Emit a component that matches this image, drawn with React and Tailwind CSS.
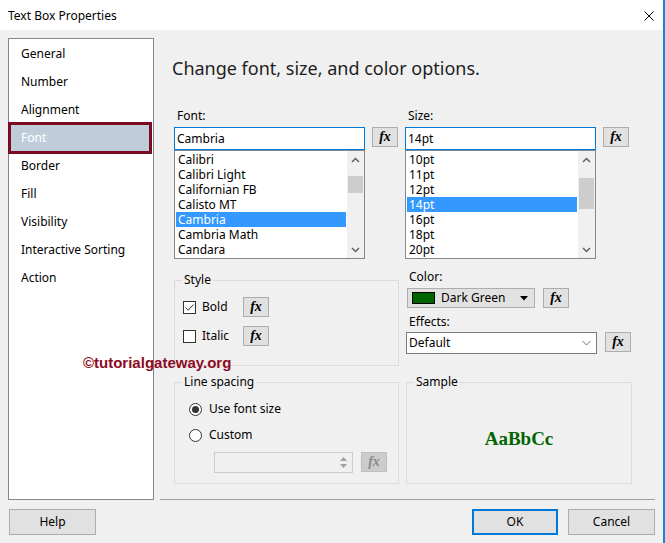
import React from 'react'

const navItems = ['General', 'Number', 'Alignment', 'Font', 'Border', 'Fill', 'Visibility', 'Interactive Sorting', 'Action']
const fontItems = ['Calibri', 'Calibri Light', 'Californian FB', 'Calisto MT', 'Cambria', 'Cambria Math', 'Candara']
const sizeItems = ['10pt', '11pt', '12pt', '14pt', '16pt', '18pt', '20pt']

function FxButton({ disabled }) {
  return (
    <button
      className={
        disabled
          ? 'w-[26px] h-[20px] shrink-0 flex items-center justify-center bg-[#cccccc] border border-[#bfbfbf] text-[#8a8a8a]'
          : 'w-[26px] h-[20px] shrink-0 flex items-center justify-center bg-[#e1e1e1] border border-[#adadad] text-black'
      }
    >
      <span className="font-['Liberation_Serif',serif] font-bold italic text-[14px] leading-none">fx</span>
    </button>
  )
}

function Scrollbar({ thumb }) {
  return (
    <div className="w-[17px] bg-[#f0f0f0] flex flex-col">
      <div className="h-[17px] flex items-center justify-center">
        <svg width="9" height="6" viewBox="0 0 9 6">
          <path d="M1 5 L4.5 1.5 L8 5" fill="none" stroke="#606060" strokeWidth="1.5" />
        </svg>
      </div>
      <div className="flex-1">
        <div className={thumb} />
      </div>
      <div className="h-[17px] flex items-center justify-center">
        <svg width="9" height="6" viewBox="0 0 9 6">
          <path d="M1 1 L4.5 4.5 L8 1" fill="none" stroke="#606060" strokeWidth="1.5" />
        </svg>
      </div>
    </div>
  )
}

function PickList({ label, value, items, selected, thumb }) {
  return (
    <div className="w-[224px] flex flex-col">
      <div className="h-[16px] leading-[16px] pl-[3px]">{label}</div>
      <div className="mt-[3px] flex items-start gap-[7px]">
        <div className="w-[191px]">
          <div className="h-[23px] border border-[#0078d7] bg-white pl-[2px] flex items-center">{value}</div>
          <div className="h-[109px] border border-[#828790] bg-white flex">
            <div className="flex-1 p-[1px]">
              {items.map(it => (
                <div
                  key={it}
                  className={
                    it === selected
                      ? 'h-[15px] leading-[15px] pl-[2px] bg-[#3399ff] text-white'
                      : 'h-[15px] leading-[15px] pl-[2px]'
                  }
                >
                  {it}
                </div>
              ))}
            </div>
            <Scrollbar thumb={thumb} />
          </div>
        </div>
        <FxButton />
      </div>
    </div>
  )
}

function GroupBox({ title, className, children }) {
  return (
    <div className={className}>
      <div className="-mt-[9px] ml-[7px] px-[2px] w-fit h-[16px] leading-[16px] bg-[#f0f0f0]">{title}</div>
      {children}
    </div>
  )
}

function Radio({ checked, label }) {
  return (
    <div className="h-[16px] flex items-center">
      <div className="w-[13px] h-[13px] rounded-full border border-[#333333] bg-white flex items-center justify-center">
        {checked && <div className="w-[7px] h-[7px] rounded-full bg-[#333333]" />}
      </div>
      <span className="ml-[7px] leading-[16px]">{label}</span>
    </div>
  )
}

function Check({ checked, label }) {
  return (
    <div className="w-[60px] h-[20px] flex items-center">
      <div className="w-[13px] h-[13px] border border-[#333333] bg-white flex items-center justify-center">
        {checked && (
          <svg width="11" height="11" viewBox="0 0 11 11">
            <path d="M1.5 5.5 L4.2 8.2 L9.5 2.5" fill="none" stroke="#333333" strokeWidth="1" />
          </svg>
        )}
      </div>
      <span className="ml-[6px] leading-[16px]">{label}</span>
    </div>
  )
}

export default function App() {
  return (
    <div className="w-[665px] h-[543px] bg-[#f0f0f0] border-r-2 border-[#1883d7] font-['Noto_Sans',sans-serif] text-[12px] text-black relative overflow-hidden">
      {/* Title bar */}
      <div className="h-[30px] bg-white flex items-center justify-between pl-[8px] pr-[9px] pt-[1px]">
        <span className="leading-[16px]">Text Box Properties</span>
        <svg width="10" height="10" viewBox="0 0 10 10">
          <path d="M0.5 0.5 L9.5 9.5 M9.5 0.5 L0.5 9.5" stroke="#000" strokeWidth="1" />
        </svg>
      </div>

      <div className="flex pl-[8px] pt-[8px]">
        {/* Left nav */}
        <div className="w-[146px] h-[462px] bg-white border border-[#828790] pt-[1px]">
          {navItems.map(n =>
            n === 'Font' ? (
              <div
                key={n}
                className="-ml-[1px] w-[144px] h-[32px] -my-[2px] border-[3px] border-[#7b0b20] bg-[#bfcddb] text-white flex items-center pl-[10px] relative"
              >
                {n}
              </div>
            ) : (
              <div key={n} className="h-[28px] flex items-center pl-[12px]">
                {n}
              </div>
            )
          )}
        </div>

        {/* Main panel */}
        <div className="flex-1 flex flex-col">
          <div className="ml-[18px] mt-[18px] h-[24px] leading-[24px] text-[18px] text-[#1e1e1e]">
            Change font, size, and color options.
          </div>

          <div className="ml-[20px] mt-[28px] flex gap-[7px]">
            <PickList label="Font:" value="Cambria" items={fontItems} selected="Cambria" thumb="mt-[8px] h-[17px] mx-[1px] bg-[#cdcdcd]" />
            <PickList label="Size:" value="14pt" items={sizeItems} selected="14pt" thumb="mt-[10px] h-[31px] mx-[1px] bg-[#cdcdcd]" />
          </div>

          <div className="ml-[20px] mt-[10px] flex gap-[7px] items-start">
            <GroupBox title="Style" className="mt-[11px] w-[225px] h-[86px] border border-[#dcdcdc]">
              <div className="ml-[8px] mt-[9px] flex items-center">
                <Check checked label="Bold" />
                <FxButton />
              </div>
              <div className="ml-[8px] mt-[9px] flex items-center">
                <Check label="Italic" />
                <FxButton />
              </div>
            </GroupBox>

            <div className="flex flex-col">
              <div className="h-[16px] leading-[16px] pl-[3px]">Color:</div>
              <div className="mt-[3px] flex gap-[8px]">
                <div className="ml-[1px] w-[128px] h-[20px] bg-[#e1e1e1] border border-[#adadad] flex items-center pl-[4px]">
                  <div className="w-[23px] h-[12px] bg-[#006400] border border-black" />
                  <span className="ml-[6px]">Dark Green</span>
                  <svg className="ml-auto mr-[6px]" width="8" height="5" viewBox="0 0 8 5">
                    <path d="M0 0 L8 0 L4 4.5 Z" fill="#000" />
                  </svg>
                </div>
                <FxButton />
              </div>
              <div className="mt-[6px] h-[16px] leading-[16px] pl-[3px]">Effects:</div>
              <div className="mt-[2px] flex items-start gap-[8px]">
                <div className="w-[191px] h-[22px] bg-white border border-[#7a7a7a] flex items-center pl-[2px]">
                  <span>Default</span>
                  <svg className="ml-auto mr-[5px]" width="9" height="6" viewBox="0 0 9 6">
                    <path d="M0.5 1 L4.5 5 L8.5 1" fill="none" stroke="#707070" strokeWidth="1" />
                  </svg>
                </div>
                <FxButton />
              </div>
            </div>
          </div>

          <div className="ml-[20px] mt-[16px] flex gap-[7px]">
            <GroupBox title="Line spacing" className="w-[225px] h-[102px] border border-[#dcdcdc] flex flex-col">
              <div className="ml-[14px] mt-[11px]">
                <Radio checked label="Use font size" />
              </div>
              <div className="ml-[14px] mt-[10px]">
                <Radio label="Custom" />
              </div>
              <div className="ml-[39px] mt-[9px] flex items-start gap-[8px]">
                <div className="w-[139px] h-[21px] border border-[#cccccc] bg-[#f0f0f0] flex justify-end">
                  <div className="w-[15px] flex flex-col items-center justify-center gap-[3px] pr-[2px]">
                    <svg width="7" height="4" viewBox="0 0 7 4">
                      <path d="M0 4 L3.5 0 L7 4 Z" fill="#a0a0a0" />
                    </svg>
                    <svg width="7" height="4" viewBox="0 0 7 4">
                      <path d="M0 0 L7 0 L3.5 4 Z" fill="#a0a0a0" />
                    </svg>
                  </div>
                </div>
                <FxButton disabled />
              </div>
            </GroupBox>

            <GroupBox title="Sample" className="w-[226px] h-[102px] border border-[#dcdcdc] flex flex-col">
              <div className="flex-1 flex items-center justify-center pt-[6px]">
                <span className="font-['Liberation_Serif',serif] font-bold text-[19px] text-[#006400]">AaBbCc</span>
              </div>
            </GroupBox>
          </div>

          <div className="ml-[6px] mr-[8px] mt-[15px] h-[1px] bg-[#a0a0a0]" />
        </div>
      </div>

      {/* Buttons */}
      <div className="mt-[9px] flex pl-[9px] pr-[8px]">
        <button className="w-[87px] h-[26px] bg-[#e1e1e1] border border-[#adadad]">Help</button>
        <button className="ml-auto w-[86px] h-[26px] bg-[#e1e1e1] border-2 border-[#0078d7]">OK</button>
        <button className="ml-[10px] w-[87px] h-[26px] bg-[#e1e1e1] border border-[#adadad]">Cancel</button>
      </div>

      {/* Watermark */}
      <div className="absolute left-[83px] top-[354px] h-[18px] leading-[18px] font-['Liberation_Sans',sans-serif] font-bold text-[15px] text-[#8c0b22]">
        ©tutorialgateway.org
      </div>
    </div>
  )
}
